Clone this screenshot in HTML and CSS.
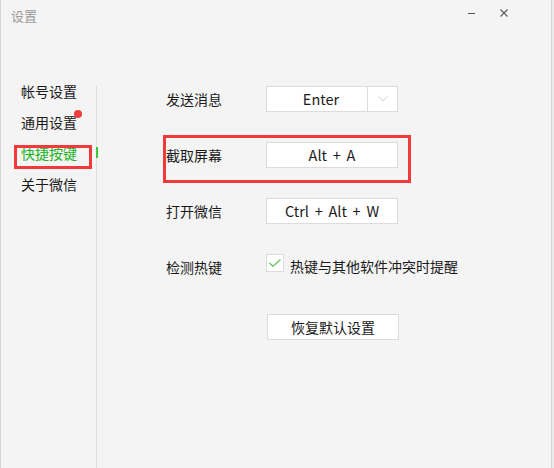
FILE: index.html
```html
<!DOCTYPE html>
<html lang="zh">
<head>
<meta charset="utf-8">
<title>设置</title>
<link rel="stylesheet" href="styles.css">
</head>
<body>
<div class="window">
  <header class="titlebar">
    <span class="title">设置</span>
    <div class="controls">
      <span class="btn-min"></span>
      <svg class="btn-close" width="8" height="8" viewBox="0 0 8 8"><path d="M0.5 0.5L7.5 7.5M7.5 0.5L0.5 7.5" stroke="#666" stroke-width="1.4" fill="none"/></svg>
    </div>
  </header>
  <div class="body">
    <nav class="sidebar">
      <div class="nav-list">
        <div class="nav-item">帐号设置</div>
        <div class="nav-item">通用设置<span class="dot"></span></div>
        <div class="nav-item active">快捷按键<span class="indicator"></span></div>
        <div class="nav-item">关于微信</div>
      </div>
    </nav>
    <main class="content">
      <div class="form">
        <div class="row">
          <span class="label">发送消息</span>
          <div class="field select">
            <span class="value">Enter</span>
            <span class="arrow"><svg width="10" height="6" viewBox="0 0 10 6"><path d="M0.5 0.5L5 5L9.5 0.5" stroke="#cfcfcf" stroke-width="1" fill="none"/></svg></span>
          </div>
        </div>
        <div class="row">
          <span class="label">截取屏幕</span>
          <div class="field"><span class="value">Alt + A</span></div>
        </div>
        <div class="row">
          <span class="label">打开微信</span>
          <div class="field"><span class="value">Ctrl + Alt + W</span></div>
        </div>
        <div class="row">
          <span class="label">检测热键</span>
          <label class="check">
            <span class="box"><svg width="18" height="18" viewBox="0 0 18 18"><path d="M3.5 9L7 12.3L14.5 5.5" stroke="#49c249" stroke-width="1.1" fill="none"/></svg></span>
            <span class="check-text">热键与其他软件冲突时提醒</span>
          </label>
        </div>
        <div class="row row-button">
          <span class="label"></span>
          <button class="reset">恢复默认设置</button>
        </div>
      </div>
    </main>
  </div>
  <div class="mark mark-nav"></div>
  <div class="mark mark-row"></div>
</div>
</body>
</html>
```

FILE: styles.css
```css
* { box-sizing: border-box; }
html, body { margin: 0; padding: 0; }
body {
  background: #ebebeb;
  font-family: "Noto Sans CJK SC", "Noto Sans", sans-serif;
  font-size: 14px;
  color: #1a1a1a;
}
.window {
  position: relative;
  width: 552px;
  height: 468px;
  background: #f4f4f4;
  border-left: 1px solid #d4d4d4;
  border-right: 1px solid #d4d4d4;
  display: flex;
  flex-direction: column;
}
.titlebar {
  height: 37px;
  display: flex;
  justify-content: space-between;
  align-items: flex-start;
  padding: 6px 0 0 10px;
}
.title {
  font-size: 13px;
  line-height: 20px;
  color: #9a9a9a;
}
.controls {
  display: flex;
  align-items: center;
  height: 14px;
  padding-right: 43px;
}
.btn-min {
  width: 7px;
  height: 1px;
  background: #555;
  margin-right: 25px;
}
.btn-close { display: block; }
.body {
  flex: 1;
  display: flex;
}
.sidebar {
  width: 96px;
  margin-top: 49px;
  border-right: 1px solid #dedede;
}
.nav-list {
  margin-top: -5px;
  display: flex;
  flex-direction: column;
  gap: 11px;
}
.nav-item {
  position: relative;
  height: 20px;
  line-height: 20px;
  padding-left: 20px;
  color: #1a1a1a;
}
.nav-item.active { color: #22b322; }
.dot {
  position: absolute;
  left: 73px;
  top: -2px;
  width: 8px;
  height: 8px;
  border-radius: 50%;
  background: #f43b3b;
}
.indicator {
  position: absolute;
  right: -2px;
  top: 4px;
  width: 2px;
  height: 11px;
  background: #39c939;
}
.content {
  flex: 1;
  padding: 49px 0 0 69px;
}
.form {
  display: flex;
  flex-direction: column;
  gap: 30px;
}
.row {
  display: flex;
  align-items: flex-start;
  height: 26px;
}
.label {
  width: 100px;
  line-height: 26px;
  color: #1a1a1a;
}
.field {
  width: 132px;
  height: 26px;
  background: #fff;
  border: 1px solid #dcdcdc;
  display: flex;
  align-items: center;
}
.value {
  flex: 1;
  text-align: center;
  line-height: 24px;
  color: #1a1a1a;
  font-size: 14.5px;
  word-spacing: 2.5px;
}
.select .value { padding-left: 8px; }
.arrow {
  width: 30px;
  height: 24px;
  border-left: 1px solid #dcdcdc;
  display: flex;
  align-items: center;
  justify-content: center;
}
.check {
  display: flex;
  align-items: flex-start;
  gap: 6px;
}
.box {
  width: 18px;
  height: 18px;
  background: #fff;
  border: 1px solid #dcdcdc;
  display: flex;
}
.box svg { margin: -1px; }
.check-text { line-height: 26px; margin-top: -1px; }
.row-button { margin-top: 4px; }
.reset {
  margin-left: 1px;
  width: 132px;
  height: 26px;
  background: #fff;
  border: 1px solid #dcdcdc;
  font-family: inherit;
  font-size: 14px;
  color: #1a1a1a;
  padding: 0;
}
.mark {
  position: absolute;
  border: 3px solid #f23a3a;
}
.mark-nav {
  left: 13px;
  top: 145px;
  width: 78px;
  height: 24px;
}
.mark-row {
  left: 162px;
  top: 135px;
  width: 248px;
  height: 48px;
}
```
